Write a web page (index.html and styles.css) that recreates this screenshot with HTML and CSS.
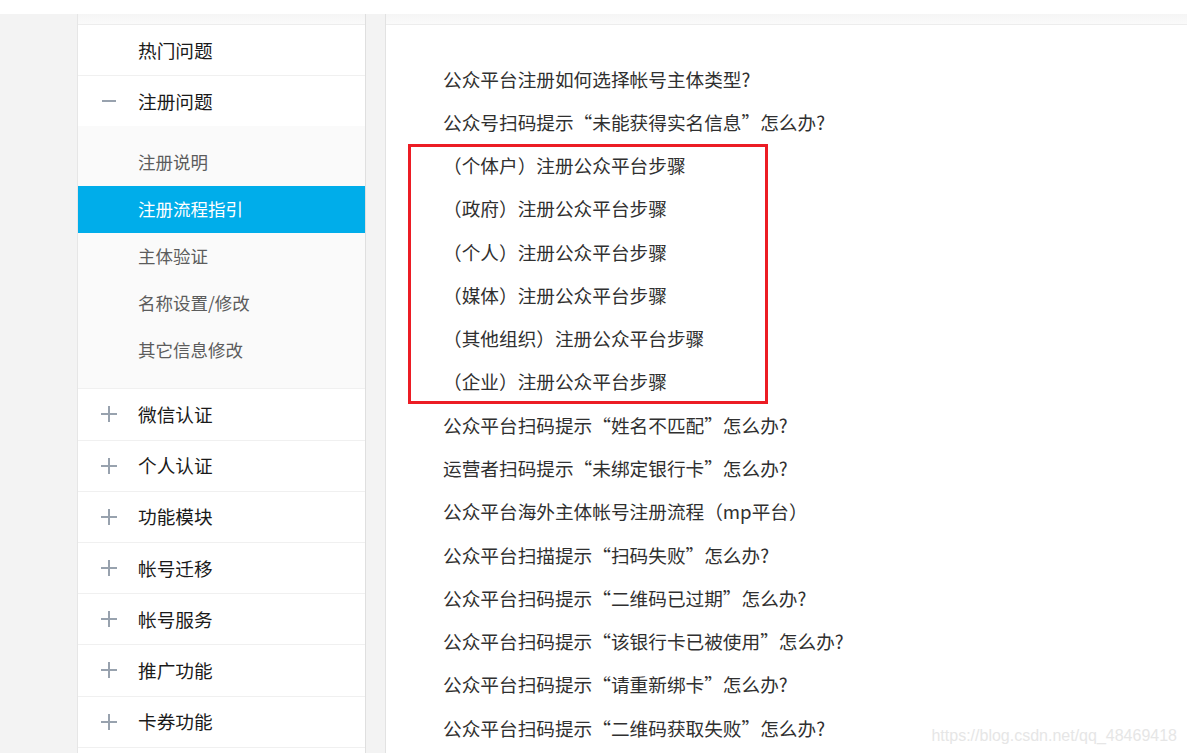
FILE: index.html
```html
<!DOCTYPE html>
<html lang="zh-CN">
<head>
<meta charset="utf-8">
<title>常见问题</title>
<link rel="stylesheet" href="styles.css">
</head>
<body>
<div class="topbar"></div>
<div class="page">
  <aside class="sidebar">
    <div class="strip"></div>
    <ul class="menu">
      <li class="menu-item">
        <div class="menu-head"><span class="ico"></span><span class="label">热门问题</span></div>
      </li>
      <li class="menu-item">
        <div class="menu-head"><span class="ico"><svg width="16" height="16" viewBox="0 0 16 16"><path d="M1 8h14" stroke="#98a2ae" stroke-width="2"/></svg></span><span class="label">注册问题</span></div>
        <ul class="sub">
          <li class="sub-item">注册说明</li>
          <li class="sub-item active">注册流程指引</li>
          <li class="sub-item">主体验证</li>
          <li class="sub-item">名称设置/修改</li>
          <li class="sub-item">其它信息修改</li>
        </ul>
      </li>
      <li class="menu-item">
        <div class="menu-head"><span class="ico"><svg width="16" height="16" viewBox="0 0 16 16"><path d="M0 8h16M8 0v16" stroke="#98a2ae" stroke-width="2"/></svg></span><span class="label">微信认证</span></div>
      </li>
      <li class="menu-item">
        <div class="menu-head"><span class="ico"><svg width="16" height="16" viewBox="0 0 16 16"><path d="M0 8h16M8 0v16" stroke="#98a2ae" stroke-width="2"/></svg></span><span class="label">个人认证</span></div>
      </li>
      <li class="menu-item">
        <div class="menu-head"><span class="ico"><svg width="16" height="16" viewBox="0 0 16 16"><path d="M0 8h16M8 0v16" stroke="#98a2ae" stroke-width="2"/></svg></span><span class="label">功能模块</span></div>
      </li>
      <li class="menu-item">
        <div class="menu-head"><span class="ico"><svg width="16" height="16" viewBox="0 0 16 16"><path d="M0 8h16M8 0v16" stroke="#98a2ae" stroke-width="2"/></svg></span><span class="label">帐号迁移</span></div>
      </li>
      <li class="menu-item">
        <div class="menu-head"><span class="ico"><svg width="16" height="16" viewBox="0 0 16 16"><path d="M0 8h16M8 0v16" stroke="#98a2ae" stroke-width="2"/></svg></span><span class="label">帐号服务</span></div>
      </li>
      <li class="menu-item">
        <div class="menu-head"><span class="ico"><svg width="16" height="16" viewBox="0 0 16 16"><path d="M0 8h16M8 0v16" stroke="#98a2ae" stroke-width="2"/></svg></span><span class="label">推广功能</span></div>
      </li>
      <li class="menu-item">
        <div class="menu-head"><span class="ico"><svg width="16" height="16" viewBox="0 0 16 16"><path d="M0 8h16M8 0v16" stroke="#98a2ae" stroke-width="2"/></svg></span><span class="label">卡券功能</span></div>
      </li>
    </ul>
  </aside>
  <main class="content">
    <div class="strip"></div>
    <div class="list-wrap">
      <ul class="faq">
        <li>公众平台注册如何选择帐号主体类型?</li>
        <li>公众号扫码提示“未能获得实名信息”怎么办?</li>
      </ul>
      <ul class="faq boxed">
        <li>（个体户）注册公众平台步骤</li>
        <li>（政府）注册公众平台步骤</li>
        <li>（个人）注册公众平台步骤</li>
        <li>（媒体）注册公众平台步骤</li>
        <li>（其他组织）注册公众平台步骤</li>
        <li>（企业）注册公众平台步骤</li>
      </ul>
      <ul class="faq">
        <li>公众平台扫码提示“姓名不匹配”怎么办?</li>
        <li>运营者扫码提示“未绑定银行卡”怎么办?</li>
        <li>公众平台海外主体帐号注册流程（mp平台）</li>
        <li>公众平台扫描提示“扫码失败”怎么办?</li>
        <li>公众平台扫码提示“二维码已过期”怎么办?</li>
        <li>公众平台扫码提示“该银行卡已被使用”怎么办?</li>
        <li>公众平台扫码提示“请重新绑卡”怎么办?</li>
        <li>公众平台扫码提示“二维码获取失败”怎么办?</li>
      </ul>
    </div>
  </main>
</div>
<div class="watermark">https://blog.csdn.net/qq_48469418</div>
</body>
</html>
```

FILE: styles.css
```css
html, body {
  margin: 0;
  padding: 0;
}
body {
  background: #f3f3f3;
  height: 753px;
  overflow: hidden;
  font-family: "Noto Sans CJK SC", "Noto Sans", sans-serif;
  position: relative;
}
ul {
  list-style: none;
  margin: 0;
  padding: 0;
}
.topbar {
  height: 14px;
  background: #ffffff;
}
.page {
  display: flex;
  padding-left: 77px;
  height: 739px;
}
.strip {
  height: 10px;
  background: linear-gradient(#f5f5f5, #fafafa);
  border-bottom: 1px solid #ededed;
}
.sidebar {
  width: 287px;
  background: #ffffff;
  border-left: 1px solid #e6e6e6;
  border-right: 1px solid #dfdfdf;
  margin-right: 19px;
  flex: none;
}
.menu-item {
  border-bottom: 1px solid #f0f0f0;
}
.menu-head {
  height: 50.2px;
  display: flex;
  align-items: center;
  padding-left: 23px;
  font-size: 18.67px;
  color: #1a1a1a;
}
.label {
  position: relative;
  top: -1px;
}
.ico {
  width: 16px;
  height: 16px;
  margin-right: 21px;
  display: flex;
}
.sub {
  background: #fafafa;
  padding: 13px 0 14px;
}
.sub-item {
  height: 47px;
  line-height: 46px;
  padding-left: 60px;
  font-size: 17.5px;
  color: #5c5c5c;
}
.sub-item.active {
  background: #00adea;
  color: #ffffff;
}
.content {
  flex: 1;
  background: #ffffff;
  border-left: 1px solid #e2e2e2;
}
.list-wrap {
  padding: 31.6px 0 0 57px;
}
.faq li {
  font-size: 18.67px;
  line-height: 43.27px;
  color: #303030;
  white-space: nowrap;
}
.boxed {
  position: relative;
  top: 0;
}
.boxed::before {
  content: "";
  position: absolute;
  top: 1px;
  bottom: -1px;
  left: -35px;
  width: 360px;
  border: 3px solid #ec1c24;
  box-sizing: border-box;
}
.watermark {
  position: absolute;
  right: 10px;
  bottom: 8px;
  font-family: "Liberation Sans", Arial, sans-serif;
  font-size: 16px;
  color: #e6e6e6;
}
```
